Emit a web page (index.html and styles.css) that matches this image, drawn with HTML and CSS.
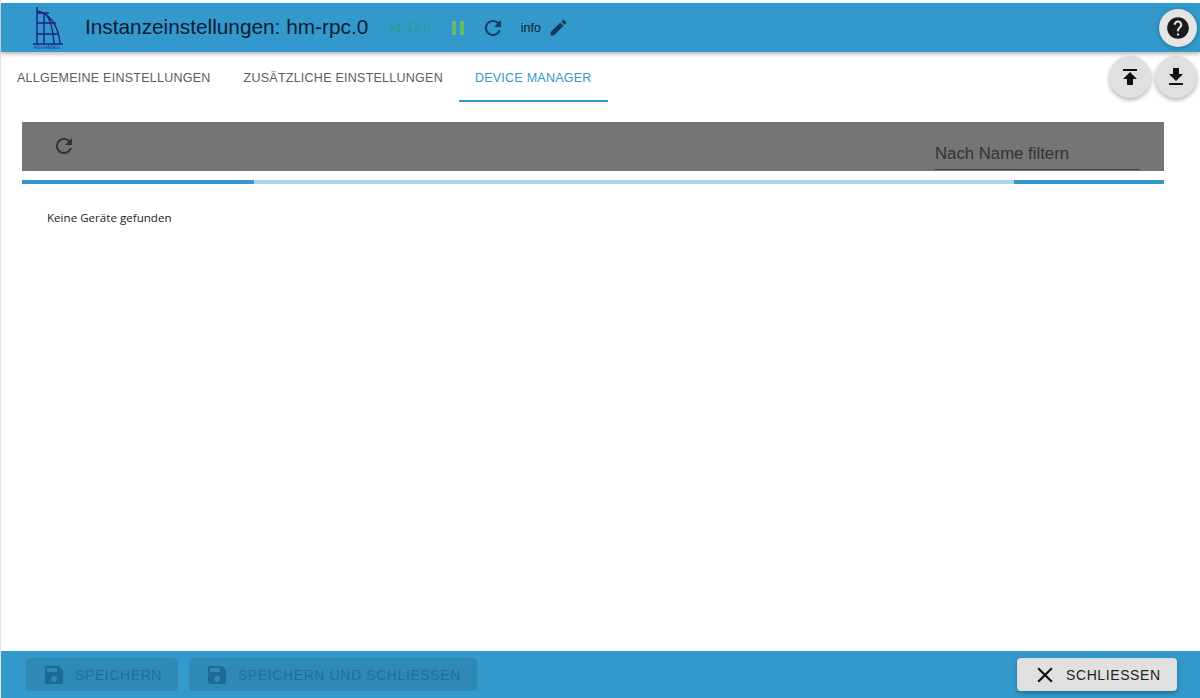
FILE: index.html
```html
<!DOCTYPE html>
<html lang="en">
<head>
    <meta charset="UTF-8">
    <meta name="viewport" content="width=device-width, initial-scale=1.0">
    <title>Instanzeinstellungen: hm-rpc.0</title>
    <link rel="stylesheet" href="styles.css">
</head>
<body>
    <div class="page">
        <header class="topbar">
            <svg class="logo" viewBox="0 0 32 46" fill="none" stroke="#1a237e">
                <path d="M5 2V39M12 8V39M5 6C18 8 27 22 28 39M12 8C18 12 21 24 22 39M1 39H31M5 8H17M5 18H24M5 29H26" stroke-width="1.4"/>
                <text x="2" y="43.5" class="logo-text">HomeMatic</text>
            </svg>
            <h1 class="title">Instanzeinstellungen: hm-rpc.0</h1>
            <span class="version">v1.17.0</span>
            <svg class="icon icon-pause" viewBox="0 0 24 24"><path d="M6 19h4V5H6v14zm8-14v14h4V5h-4z"/></svg>
            <svg class="icon icon-reload" viewBox="0 0 24 24"><path d="M17.65 6.35C16.2 4.9 14.21 4 12 4c-4.42 0-7.99 3.58-7.99 8s3.57 8 7.99 8c3.73 0 6.84-2.55 7.73-6h-2.08c-.82 2.33-3.04 4-5.65 4-3.31 0-6-2.69-6-6s2.69-6 6-6c1.66 0 3.14.69 4.22 1.78L13 11h7V4l-2.35 2.35z"/></svg>
            <span class="loglevel">info</span>
            <svg class="icon icon-edit" viewBox="0 0 24 24"><path d="M3 17.25V21h3.75L17.81 9.94l-3.75-3.75L3 17.25zM20.71 7.04c.39-.39.39-1.02 0-1.41l-2.34-2.34a.9959.9959 0 0 0-1.41 0l-1.83 1.83 3.75 3.75 1.83-1.83z"/></svg>
            <button class="help-btn" type="button">
                <svg viewBox="0 0 24 24"><path d="M12 2C6.48 2 2 6.48 2 12s4.48 10 10 10 10-4.48 10-10S17.52 2 12 2zm1 17h-2v-2h2v2zm2.07-7.75l-.9.92C13.45 12.9 13 13.5 13 15h-2v-.5c0-1.1.45-2.1 1.17-2.83l1.24-1.26c.37-.36.59-.86.59-1.41 0-1.1-.9-2-2-2s-2 .9-2 2H8c0-2.21 1.79-4 4-4s4 1.79 4 4c0 .88-.36 1.68-.93 2.25z"/></svg>
            </button>
        </header>

        <nav class="tabs">
            <a class="tab">Allgemeine Einstellungen</a>
            <a class="tab tab-second">Zusätzliche Einstellungen</a>
            <a class="tab active">Device Manager</a>
            <div class="fabs">
                <button class="fab" type="button">
                    <svg viewBox="0 0 24 24"><path d="M5 4v2h14V4H5zm0 10h4v6h6v-6h4l-7-7-7 7z"/></svg>
                </button>
                <button class="fab" type="button">
                    <svg viewBox="0 0 24 24"><path d="M19 9h-4V3H9v6H5l7 7 7-7zM5 18v2h14v-2H5z"/></svg>
                </button>
            </div>
        </nav>

        <main class="content">
            <div class="toolbar">
                <svg class="icon toolbar-reload" viewBox="0 0 24 24"><path d="M17.65 6.35C16.2 4.9 14.21 4 12 4c-4.42 0-7.99 3.58-7.99 8s3.57 8 7.99 8c3.73 0 6.84-2.55 7.73-6h-2.08c-.82 2.33-3.04 4-5.65 4-3.31 0-6-2.69-6-6s2.69-6 6-6c1.66 0 3.14.69 4.22 1.78L13 11h7V4l-2.35 2.35z"/></svg>
                <div class="filter">Nach Name filtern</div>
            </div>
            <div class="progress">
                <div class="bar bar-left"></div>
                <div class="bar bar-track"></div>
                <div class="bar bar-right"></div>
            </div>
            <p class="empty">Keine Geräte gefunden</p>
        </main>

        <footer class="footer">
            <button class="btn btn-disabled btn-save" type="button">
                <svg viewBox="0 0 24 24"><path d="M17 3H5c-1.11 0-2 .9-2 2v14c0 1.1.89 2 2 2h14c1.1 0 2-.9 2-2V7l-4-4zm-5 16c-1.66 0-3-1.34-3-3s1.34-3 3-3 3 1.34 3 3-1.34 3-3 3zm3-10H5V5h10v4z"/></svg>
                Speichern
            </button>
            <button class="btn btn-disabled btn-saveclose" type="button">
                <svg viewBox="0 0 24 24"><path d="M17 3H5c-1.11 0-2 .9-2 2v14c0 1.1.89 2 2 2h14c1.1 0 2-.9 2-2V7l-4-4zm-5 16c-1.66 0-3-1.34-3-3s1.34-3 3-3 3 1.34 3 3-1.34 3-3 3zm3-10H5V5h10v4z"/></svg>
                Speichern und schliessen
            </button>
            <button class="btn btn-close" type="button">
                <svg viewBox="0 0 24 24"><path d="M19 6.41L17.59 5 12 10.59 6.41 5 5 6.41 10.59 12 5 17.59 6.41 19 12 13.41 17.59 19 19 17.59 13.41 12 19 6.41z"/></svg>
                Schliessen
            </button>
        </footer>
    </div>
</body>
</html>
```

FILE: styles.css
```css
html, body {
    margin: 0;
    padding: 0;
    height: 100%;
    overflow: hidden;
    background-color: #fff;
    font-family: "Liberation Sans", Arial, sans-serif;
}
.page {
    display: flex;
    flex-direction: column;
    height: 698px;
    box-sizing: border-box;
    padding-top: 3px;
    border-left: 1px solid #e4e4e4;
}
.topbar {
    display: flex;
    align-items: center;
    flex: 0 0 49px;
    background-color: #3399cc;
    box-shadow: 0 2px 4px rgba(0, 0, 0, 0.3);
    position: relative;
    z-index: 2;
}
.logo {
    width: 32px;
    height: 46px;
    margin-left: 31px;
}
.logo-text {
    font-size: 5.2px;
    fill: #1a3a8e;
    stroke: none;
}
.title {
    margin: -2px 0 0 21px;
    font-size: 20.8px;
    font-weight: 400;
    color: #0b1c33;
    white-space: nowrap;
}
.version {
    margin-left: 21px;
    font-size: 12px;
    letter-spacing: 0.3px;
    color: #2f9a78;
}
.icon {
    width: 24px;
    height: 24px;
    flex: none;
}
.icon-pause {
    margin-left: 15px;
    fill: #66bb6a;
}
.icon-reload {
    margin-left: 11px;
    fill: #123f63;
}
.loglevel {
    margin-left: 16px;
    font-size: 12.5px;
    color: #0b1c33;
}
.icon-edit {
    margin-left: 7px;
    width: 21px;
    height: 21px;
    fill: #143a5a;
}
.help-btn {
    margin-left: auto;
    margin-right: 3px;
    width: 38px;
    height: 38px;
    padding: 0;
    border: none;
    border-radius: 50%;
    background-color: #e4e4e4;
    display: flex;
    align-items: center;
    justify-content: center;
    box-shadow: 0 1px 5px rgba(0, 0, 0, 0.3);
}
.help-btn svg {
    width: 26px;
    height: 26px;
    fill: #1b1b1b;
}
.tabs {
    display: flex;
    flex: 0 0 50px;
    align-items: stretch;
}
.tab {
    box-sizing: border-box;
    padding: 19px 16px 0;
    height: 50px;
    font-size: 12.5px;
    letter-spacing: 0.25px;
    text-transform: uppercase;
    color: #5c5c5c;
    white-space: nowrap;
}
.tab-second {
    margin-left: 1px;
}
.tab.active {
    color: #3399cc;
    border-bottom: 2px solid #3399cc;
}
.fabs {
    display: flex;
    gap: 4px;
    margin-left: auto;
    margin-right: 3px;
    padding-top: 4px;
}
.fab {
    width: 42px;
    height: 42px;
    padding: 0;
    border: none;
    border-radius: 50%;
    background-color: #e0e0e0;
    display: flex;
    align-items: center;
    justify-content: center;
    box-shadow: 0 2px 4px rgba(0, 0, 0, 0.3);
}
.fab svg {
    width: 24px;
    height: 24px;
    fill: #111;
}
.content {
    flex: 1;
    padding: 20px 36px 0 21px;
}
.toolbar {
    display: flex;
    justify-content: space-between;
    height: 49px;
    background-color: #757575;
}
.toolbar-reload {
    margin: 12px 0 0 30px;
    fill: #333;
}
.filter {
    box-sizing: border-box;
    width: 205px;
    height: 48px;
    margin-right: 24px;
    padding-top: 22px;
    font-size: 16.75px;
    color: #333;
    border-bottom: 1px solid #4a4a4a;
}
.progress {
    display: flex;
    height: 4px;
    margin-top: 9px;
}
.bar-left {
    width: 232px;
    background-color: #3399cc;
}
.bar-track {
    flex: 1;
    background-color: #add6ea;
}
.bar-right {
    width: 150px;
    background-color: #3399cc;
}
.empty {
    margin: 26px 0 0 25px;
    font-family: "Open Sans", sans-serif;
    font-size: 11.6px;
    color: #222;
}
.footer {
    display: flex;
    align-items: center;
    flex: 0 0 47px;
    box-sizing: border-box;
    padding: 0 23px 0 25px;
    background-color: #3399cc;
}
.btn {
    display: flex;
    align-items: center;
    height: 33px;
    padding: 0;
    border: none;
    border-radius: 4px;
    font-family: inherit;
    font-size: 14px;
    letter-spacing: 0.6px;
    text-transform: uppercase;
}
.btn svg {
    width: 24px;
    height: 24px;
    flex: none;
}
.btn-disabled {
    background-color: #2e89b7;
    color: #1f6f9c;
}
.btn-disabled svg {
    fill: #1c6a96;
    margin: 0 9px 0 16px;
}
.btn-save {
    width: 152px;
}
.btn-saveclose {
    width: 288px;
    margin-left: 11px;
}
.btn-close {
    width: 160px;
    margin-left: auto;
    background-color: #e0e0e0;
    color: #222;
    box-shadow: 0 2px 4px rgba(0, 0, 0, 0.3);
}
.btn-close svg {
    fill: #111;
    width: 26px;
    height: 26px;
    margin: 0 8px 0 15px;
}
```
